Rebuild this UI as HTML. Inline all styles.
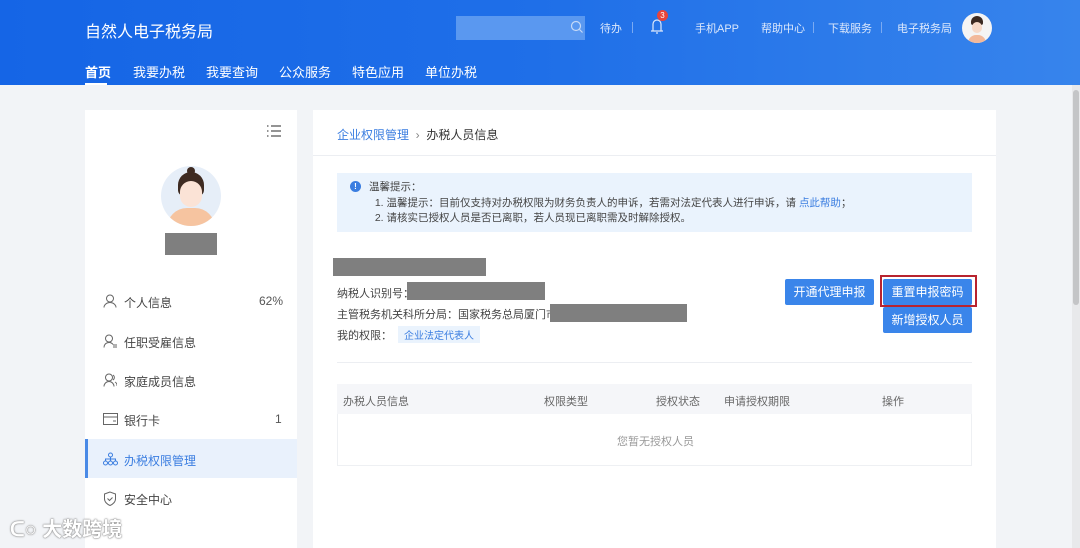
<!DOCTYPE html>
<html><head><meta charset="utf-8"><style>
*{margin:0;padding:0;box-sizing:border-box}
body{width:1080px;height:548px;overflow:hidden;background:#f2f4f7;font-family:"Liberation Sans","Noto Sans CJK SC",sans-serif;position:relative;color:#333}
.hd{position:absolute;left:0;top:0;width:1080px;height:85px;background:linear-gradient(90deg,#1565e6,#1f6fe8 50%,#3784ec)}
.abs{position:absolute;white-space:nowrap}
.w{color:#fff}
.card{position:absolute;background:#fff}
.gray{position:absolute;background:#7f7f7f}
.btn{position:absolute;background:#3a85ea;color:#fff;font-size:12px;text-align:center;line-height:26px;border-radius:2px}
.mi{position:absolute;left:124px;font-size:12px;color:#444}
.ic{position:absolute;left:103px}
</style></head><body>
<div class="hd"></div>
<div class="abs w" style="left:85px;top:18px;font-size:16px">自然人电子税务局</div>
<div class="abs w" style="left:85px;top:62px;font-size:13px;font-weight:bold">首页</div>
<div style="position:absolute;left:85px;top:83px;width:22px;height:2px;background:#fff"></div>
<div class="abs w" style="left:133px;top:62px;font-size:13px">我要办税</div>
<div class="abs w" style="left:206px;top:62px;font-size:13px">我要查询</div>
<div class="abs w" style="left:279px;top:62px;font-size:13px">公众服务</div>
<div class="abs w" style="left:352px;top:62px;font-size:13px">特色应用</div>
<div class="abs w" style="left:425px;top:62px;font-size:13px">单位办税</div>
<div style="position:absolute;left:456px;top:16px;width:129px;height:24px;background:#5a98f0"></div>
<svg style="position:absolute;left:570px;top:20px" width="14" height="14"><circle cx="6" cy="6" r="4.5" stroke="#c5d9f7" fill="none" stroke-width="1.2"/><path d="M9.5 9.5L12.5 12.5" stroke="#c5d9f7" stroke-width="1.2"/></svg>
<div class="abs" style="left:600px;top:20px;font-size:11px;color:#dce8fb">待办</div>
<div style="position:absolute;left:632px;top:22px;width:1px;height:11px;background:#7aaaf2"></div>
<svg style="position:absolute;left:648px;top:16px" width="18" height="20"><path d="M3 15h12M5 15V8a4 4 0 0 1 8 0v7M8 17h2" stroke="#dce8fb" fill="none" stroke-width="1.2"/></svg>
<div class="abs" style="left:657px;top:10px;width:11px;height:11px;border-radius:50%;background:#e8443a;color:#fff;font-size:8px;text-align:center;line-height:11px">3</div>
<div class="abs" style="left:695px;top:20px;font-size:11px;color:#dce8fb">手机APP</div>
<div class="abs" style="left:761px;top:20px;font-size:11px;color:#dce8fb">帮助中心</div>
<div style="position:absolute;left:813px;top:22px;width:1px;height:11px;background:#7aaaf2"></div>
<div class="abs" style="left:828px;top:20px;font-size:11px;color:#dce8fb">下载服务</div>
<div style="position:absolute;left:881px;top:22px;width:1px;height:11px;background:#7aaaf2"></div>
<div class="abs" style="left:897px;top:20px;font-size:11px;color:#dce8fb">电子税务局</div>
<div style="position:absolute;left:962px;top:13px;width:30px;height:30px;border-radius:50%;background:#f4f4f4;overflow:hidden"><div style="position:absolute;left:9px;top:3px;width:12px;height:9px;border-radius:6px 6px 2px 2px;background:#3b2a22"></div><div style="position:absolute;left:10px;top:9px;width:10px;height:11px;border-radius:5px;background:#f6d9c8"></div><div style="position:absolute;left:6px;top:22px;width:18px;height:10px;border-radius:8px 8px 0 0;background:#f2b99b"></div></div>

<div class="card" style="left:85px;top:110px;width:212px;height:438px"></div>
<svg style="position:absolute;left:267px;top:125px" width="14" height="12"><path d="M0 1h1.5M0 6h1.5M0 11h1.5M4 1h10M4 6h10M4 11h10" stroke="#555" stroke-width="1.2"/></svg>
<div style="position:absolute;left:161px;top:166px;width:60px;height:60px;border-radius:50%;background:#e6eef8;overflow:hidden">
<div style="position:absolute;left:17px;top:6px;width:26px;height:24px;border-radius:13px 13px 6px 6px;background:#3e2b22"></div>
<div style="position:absolute;left:26px;top:1px;width:8px;height:8px;border-radius:50%;background:#3e2b22"></div>
<div style="position:absolute;left:19px;top:15px;width:22px;height:26px;border-radius:11px;background:#fbe3d6"></div>
<div style="position:absolute;left:6px;top:42px;width:48px;height:24px;border-radius:20px 20px 0 0;background:#f6c4a0"></div></div>
<div class="gray" style="left:165px;top:233px;width:52px;height:22px"></div>
<svg class="ic" style="top:294px" width="14" height="14"><circle cx="7" cy="4.5" r="3.5" fill="none" stroke="#666"/><path d="M1 13.5a6 5 0 0 1 12 0" fill="none" stroke="#666"/></svg>
<div class="mi" style="top:294px">个人信息</div><div class="abs" style="left:259px;top:294px;font-size:12px;color:#555">62%</div>
<svg class="ic" style="top:334px" width="14" height="14"><circle cx="6" cy="4.5" r="3.5" fill="none" stroke="#666"/><path d="M1 13.5a5 5 0 0 1 9-3M10 11h4M10 13h4" fill="none" stroke="#666"/></svg>
<div class="mi" style="top:334px">任职受雇信息</div>
<svg class="ic" style="top:373px" width="14" height="14"><circle cx="6" cy="4.5" r="3.5" fill="none" stroke="#666"/><path d="M1 13.5a5 5 0 0 1 10 0M10 2a3 3 0 0 1 0 5M12 9a4 4 0 0 1 2 4" fill="none" stroke="#666"/></svg>
<div class="mi" style="top:373px">家庭成员信息</div>
<svg class="ic" style="top:413px" width="15" height="12"><rect x="0.5" y="0.5" width="14" height="11" fill="none" stroke="#666"/><path d="M0 4h15M10 8h3" stroke="#666"/></svg>
<div class="mi" style="top:412px">银行卡</div><div class="abs" style="left:275px;top:412px;font-size:12px;color:#555">1</div>
<div style="position:absolute;left:85px;top:439px;width:212px;height:39px;background:#e9f1fc;border-left:3px solid #4a8ae6"></div>
<svg class="ic" style="top:452px" width="15" height="14"><circle cx="7.5" cy="3" r="2" fill="none" stroke="#3a7de0"/><circle cx="2.5" cy="11" r="2" fill="none" stroke="#3a7de0"/><circle cx="7.5" cy="11" r="2" fill="none" stroke="#3a7de0"/><circle cx="12.5" cy="11" r="2" fill="none" stroke="#3a7de0"/><path d="M7.5 5v4M2.5 9V7h10v2" fill="none" stroke="#3a7de0"/></svg>
<div class="mi" style="top:452px;color:#3a7de0">办税权限管理</div>
<svg class="ic" style="top:491px" width="14" height="15"><path d="M7 1L1.5 3v5c0 3 3 5.5 5.5 6.5 2.5-1 5.5-3.5 5.5-6.5V3z" fill="none" stroke="#666"/><path d="M4.5 7.5l2 2 3-3" fill="none" stroke="#666"/></svg>
<div class="mi" style="top:491px">安全中心</div>
<div class="abs" style="left:10px;top:513px;font-size:20px;color:#fff;font-weight:bold;text-shadow:0 0 2px #888,0 0 1px #555">ᑕ○ 大数跨境</div>

<div class="card" style="left:313px;top:110px;width:683px;height:438px"></div>
<div class="abs" style="left:337px;top:126px;font-size:12px;color:#3a7de0">企业权限管理 <span style="color:#888">&nbsp;›&nbsp;</span> <span style="color:#333">办税人员信息</span></div>
<div style="position:absolute;left:313px;top:155px;width:683px;height:1px;background:#eceef2"></div>
<div style="position:absolute;left:337px;top:173px;width:635px;height:59px;background:#eaf3fd"></div>
<div class="abs" style="left:350px;top:181px;width:11px;height:11px;border-radius:50%;background:#3a7de0;color:#fff;font-size:8px;text-align:center;line-height:11px;font-weight:bold">!</div>
<div class="abs" style="left:369px;top:180px;font-size:10.5px;color:#444;line-height:15.5px">温馨提示：<br>&nbsp;&nbsp;1. 温馨提示：目前仅支持对办税权限为财务负责人的申诉，若需对法定代表人进行申诉，请 <span style="color:#3a7de0">点此帮助</span>；<br>&nbsp;&nbsp;2. 请核实已授权人员是否已离职，若人员现已离职需及时解除授权。</div>
<div class="gray" style="left:333px;top:258px;width:153px;height:18px"></div>
<div class="abs" style="left:337px;top:285px;font-size:11px;color:#444">纳税人识别号：</div>
<div class="gray" style="left:407px;top:282px;width:138px;height:18px"></div>
<div class="abs" style="left:337px;top:306px;font-size:11px;color:#444">主管税务机关科所分局：国家税务总局厦门市</div>
<div class="gray" style="left:550px;top:304px;width:137px;height:18px"></div>
<div class="abs" style="left:337px;top:327px;font-size:11px;color:#444">我的权限：</div>
<div class="abs" style="left:398px;top:326px;font-size:10px;color:#3a7de0;background:#eaf3fd;padding:1px 6px">企业法定代表人</div>
<div class="btn" style="left:785px;top:279px;width:89px">开通代理申报</div>
<div style="position:absolute;left:880px;top:275px;width:97px;height:32px;border:2px solid #b8232f"></div>
<div class="btn" style="left:883px;top:279px;width:89px">重置申报密码</div>
<div class="btn" style="left:883px;top:307px;width:89px">新增授权人员</div>
<div style="position:absolute;left:337px;top:362px;width:635px;height:1px;background:#eceef2"></div>
<div style="position:absolute;left:337px;top:384px;width:635px;height:82px;border:1px solid #eef0f3;border-top:none"></div>
<div style="position:absolute;left:337px;top:384px;width:635px;height:30px;background:#f5f6f9"></div>
<div class="abs" style="left:343px;top:393px;font-size:11px;color:#666">办税人员信息</div>
<div class="abs" style="left:544px;top:393px;font-size:11px;color:#666">权限类型</div>
<div class="abs" style="left:656px;top:393px;font-size:11px;color:#666">授权状态</div>
<div class="abs" style="left:724px;top:393px;font-size:11px;color:#666">申请授权期限</div>
<div class="abs" style="left:882px;top:393px;font-size:11px;color:#666">操作</div>
<div class="abs" style="left:617px;top:433px;font-size:11px;color:#999">您暂无授权人员</div>
<div style="position:absolute;left:1072px;top:85px;width:8px;height:463px;background:#e8e9eb"></div>
<div style="position:absolute;left:1073px;top:90px;width:6px;height:215px;background:#c4c5c7;border-radius:3px"></div>
</body></html>
